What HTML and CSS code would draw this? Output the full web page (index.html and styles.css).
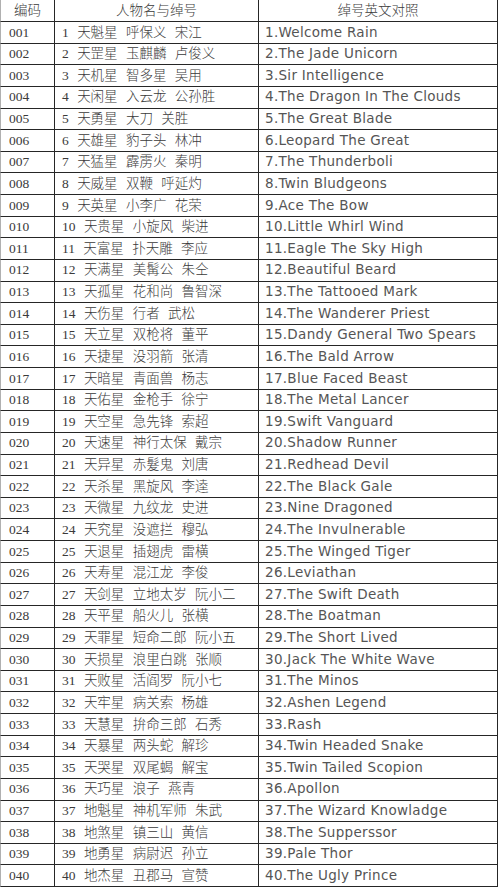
FILE: index.html
```html
<!DOCTYPE html>
<html lang="zh">
<head>
<meta charset="utf-8">
<title>水浒一百零八将 绰号英文对照</title>
<link rel="stylesheet" href="styles.css">
</head>
<body>
<div class="sheet">
  <div class="cell head c1">编码</div><div class="cell head c2">人物名与绰号</div><div class="cell head c3">绰号英文对照</div>
  <div class="cell c1">001</div><div class="cell c2">1 天魁星 呼保义 宋江</div><div class="cell c3">1.Welcome Rain</div>
  <div class="cell c1">002</div><div class="cell c2">2 天罡星 玉麒麟 卢俊义</div><div class="cell c3">2.The Jade Unicorn</div>
  <div class="cell c1">003</div><div class="cell c2">3 天机星 智多星 吴用</div><div class="cell c3">3.Sir Intelligence</div>
  <div class="cell c1">004</div><div class="cell c2">4 天闲星 入云龙 公孙胜</div><div class="cell c3">4.The Dragon In The Clouds</div>
  <div class="cell c1">005</div><div class="cell c2">5 天勇星 大刀 关胜</div><div class="cell c3">5.The Great Blade</div>
  <div class="cell c1">006</div><div class="cell c2">6 天雄星 豹子头 林冲</div><div class="cell c3">6.Leopard The Great</div>
  <div class="cell c1">007</div><div class="cell c2">7 天猛星 霹雳火 秦明</div><div class="cell c3">7.The Thunderboli</div>
  <div class="cell c1">008</div><div class="cell c2">8 天威星 双鞭 呼延灼</div><div class="cell c3">8.Twin Bludgeons</div>
  <div class="cell c1">009</div><div class="cell c2">9 天英星 小李广 花荣</div><div class="cell c3">9.Ace The Bow</div>
  <div class="cell c1">010</div><div class="cell c2">10 天贵星 小旋风 柴进</div><div class="cell c3">10.Little Whirl Wind</div>
  <div class="cell c1">011</div><div class="cell c2">11 天富星 扑天雕 李应</div><div class="cell c3">11.Eagle The Sky High</div>
  <div class="cell c1">012</div><div class="cell c2">12 天满星 美髯公 朱仝</div><div class="cell c3">12.Beautiful Beard</div>
  <div class="cell c1">013</div><div class="cell c2">13 天孤星 花和尚 鲁智深</div><div class="cell c3">13.The Tattooed Mark</div>
  <div class="cell c1">014</div><div class="cell c2">14 天伤星 行者 武松</div><div class="cell c3">14.The Wanderer Priest</div>
  <div class="cell c1">015</div><div class="cell c2">15 天立星 双枪将 董平</div><div class="cell c3">15.Dandy General Two Spears</div>
  <div class="cell c1">016</div><div class="cell c2">16 天捷星 没羽箭 张清</div><div class="cell c3">16.The Bald Arrow</div>
  <div class="cell c1">017</div><div class="cell c2">17 天暗星 青面兽 杨志</div><div class="cell c3">17.Blue Faced Beast</div>
  <div class="cell c1">018</div><div class="cell c2">18 天佑星 金枪手 徐宁</div><div class="cell c3">18.The Metal Lancer</div>
  <div class="cell c1">019</div><div class="cell c2">19 天空星 急先锋 索超</div><div class="cell c3">19.Swift Vanguard</div>
  <div class="cell c1">020</div><div class="cell c2">20 天速星 神行太保 戴宗</div><div class="cell c3">20.Shadow Runner</div>
  <div class="cell c1">021</div><div class="cell c2">21 天异星 赤髮鬼 刘唐</div><div class="cell c3">21.Redhead Devil</div>
  <div class="cell c1">022</div><div class="cell c2">22 天杀星 黑旋风 李逵</div><div class="cell c3">22.The Black Gale</div>
  <div class="cell c1">023</div><div class="cell c2">23 天微星 九纹龙 史进</div><div class="cell c3">23.Nine Dragoned</div>
  <div class="cell c1">024</div><div class="cell c2">24 天究星 没遮拦 穆弘</div><div class="cell c3">24.The Invulnerable</div>
  <div class="cell c1">025</div><div class="cell c2">25 天退星 插翅虎 雷横</div><div class="cell c3">25.The Winged Tiger</div>
  <div class="cell c1">026</div><div class="cell c2">26 天寿星 混江龙 李俊</div><div class="cell c3">26.Leviathan</div>
  <div class="cell c1">027</div><div class="cell c2">27 天剑星 立地太岁 阮小二</div><div class="cell c3">27.The Swift Death</div>
  <div class="cell c1">028</div><div class="cell c2">28 天平星 船火儿 张横</div><div class="cell c3">28.The Boatman</div>
  <div class="cell c1">029</div><div class="cell c2">29 天罪星 短命二郎 阮小五</div><div class="cell c3">29.The Short Lived</div>
  <div class="cell c1">030</div><div class="cell c2">30 天损星 浪里白跳 张顺</div><div class="cell c3">30.Jack The White Wave</div>
  <div class="cell c1">031</div><div class="cell c2">31 天败星 活阎罗 阮小七</div><div class="cell c3">31.The Minos</div>
  <div class="cell c1">032</div><div class="cell c2">32 天牢星 病关索 杨雄</div><div class="cell c3">32.Ashen Legend</div>
  <div class="cell c1">033</div><div class="cell c2">33 天慧星 拚命三郎 石秀</div><div class="cell c3">33.Rash</div>
  <div class="cell c1">034</div><div class="cell c2">34 天暴星 两头蛇 解珍</div><div class="cell c3">34.Twin Headed Snake</div>
  <div class="cell c1">035</div><div class="cell c2">35 天哭星 双尾蝎 解宝</div><div class="cell c3">35.Twin Tailed Scopion</div>
  <div class="cell c1">036</div><div class="cell c2">36 天巧星 浪子 燕青</div><div class="cell c3">36.Apollon</div>
  <div class="cell c1">037</div><div class="cell c2">37 地魁星 神机军师 朱武</div><div class="cell c3">37.The Wizard Knowladge</div>
  <div class="cell c1">038</div><div class="cell c2">38 地煞星 镇三山 黄信</div><div class="cell c3">38.The Supperssor</div>
  <div class="cell c1">039</div><div class="cell c2">39 地勇星 病尉迟 孙立</div><div class="cell c3">39.Pale Thor</div>
  <div class="cell c1">040</div><div class="cell c2">40 地杰星 丑郡马 宣赞</div><div class="cell c3">40.The Ugly Prince</div>
</div>
</body>
</html>
```
FILE: styles.css
```css
html, body {
  margin: 0;
  padding: 0;
  background: #ffffff;
}

.sheet {
  width: 498px;
  height: 887px;
  display: grid;
  grid-template-columns: 55px 204px 239px;
  grid-template-rows: 22px repeat(40, 1fr);
  font-family: "Liberation Serif", "Noto Sans CJK SC", serif;
  font-size: 13.5px;
  color: #3a3a3a;
}

.cell {
  box-sizing: border-box;
  display: flex;
  align-items: center;
  border-bottom: 1px solid #262626;
  border-right: 1px solid #262626;
  white-space: nowrap;
  overflow: hidden;
  line-height: 1;
}

.c1 {
  padding-left: 8px;
  border-left: 1px solid #b0b0b0;
}

.c2 {
  padding-left: 7px;
  word-spacing: 5px;
  font-weight: 300;
}

.c3 {
  padding-left: 6px;
  font-family: "DejaVu Sans", Verdana, sans-serif;
  font-size: 13.5px;
  letter-spacing: 0.3px;
  color: #555555;
}

.head {
  justify-content: center;
  padding-left: 0;
  font-family: "Liberation Serif", "Noto Sans CJK SC", serif;
  font-size: 13.5px;
  font-weight: 300;
  color: #3a3a3a;
  word-spacing: 0;
  letter-spacing: 0;
}
```
